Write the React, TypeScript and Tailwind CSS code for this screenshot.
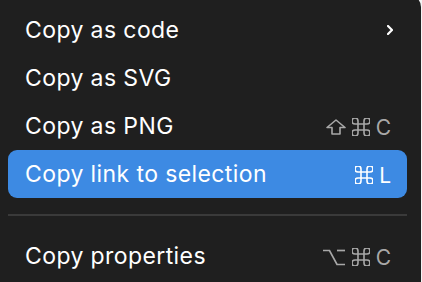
import React from 'react';

type Key = 'shift' | 'cmd' | 'opt' | string;
type Item = { label: string; keys?: Key[]; submenu?: boolean; active?: boolean };

const top: Item[] = [
  { label: 'Copy as code', submenu: true },
  { label: 'Copy as SVG' },
  { label: 'Copy as PNG', keys: ['shift', 'cmd', 'C'] },
  { label: 'Copy link to selection', keys: ['cmd', 'L'], active: true },
];

function KeyGlyph({ k }: { k: Key }) {
  if (k === 'shift')
    return (
      <svg width="20" height="16" viewBox="0 0 20 16" fill="none" stroke="currentColor" strokeWidth="1.6" strokeLinejoin="round">
        <path d="M10 1 L19 8.5 H14 V15 H6 V8.5 H1 Z" />
      </svg>
    );
  if (k === 'cmd')
    return (
      <svg width="18" height="18" viewBox="3 3 18 18" fill="none" stroke="currentColor" strokeWidth="1.6">
        <path d="M15 6v12a3 3 0 1 0 3-3H6a3 3 0 1 0 3 3V6a3 3 0 1 0-3 3h12a3 3 0 1 0-3-3" />
      </svg>
    );
  if (k === 'opt')
    return (
      <svg width="24" height="17" viewBox="0 0 24 17" fill="none" stroke="currentColor" strokeWidth="1.7">
        <path d="M1 1.5 H7.5 L15 15.5 H23" />
        <path d="M15 1.5 H23" />
      </svg>
    );
  return <span className="text-[21px] leading-none">{k}</span>;
}

function Row({ item }: { item: Item }) {
  return (
    <div
      className={
        'flex h-[48px] items-center justify-between rounded-[9px] pl-[17px] pr-[16px] ' +
        (item.active ? 'bg-[#3d8ae3] text-white' : 'text-white')
      }
    >
      <span className="text-[23px] tracking-[0.4px]">{item.label}</span>
      {item.submenu && (
        <svg width="6" height="10" viewBox="0 0 6 10" fill="none" stroke="currentColor" strokeWidth="2.2" strokeLinecap="round" strokeLinejoin="round" className="-mr-[2px]">
          <path d="M1 1 L5 5 L1 9" />
        </svg>
      )}
      {item.keys && (
        <span className={'flex items-center gap-[6px] pt-[2px] ' + (item.active ? 'text-white' : 'text-[#a8a8a8]')}>
          {item.keys.map((k) => (
            <KeyGlyph key={k} k={k} />
          ))}
        </span>
      )}
    </div>
  );
}

export default function App() {
  return (
    <div className="h-[282px] w-[422px] overflow-hidden bg-[#f4f4f4]" style={{ fontFamily: 'Inter, "Noto Sans", sans-serif' }}>
      <div className="-mt-[5px] h-[292px] w-[421px] rounded-tr-[12px] bg-[#1f1f1f] pl-[8px] pr-[14px] pt-[11px]">
        {top.map((it) => (
          <Row key={it.label} item={it} />
        ))}
        <div className="py-[16px]">
          <div className="h-[2px] bg-[#3a3a3a]" />
        </div>
        <Row item={{ label: 'Copy properties', keys: ['opt', 'cmd', 'C'] }} />
      </div>
    </div>
  );
}
